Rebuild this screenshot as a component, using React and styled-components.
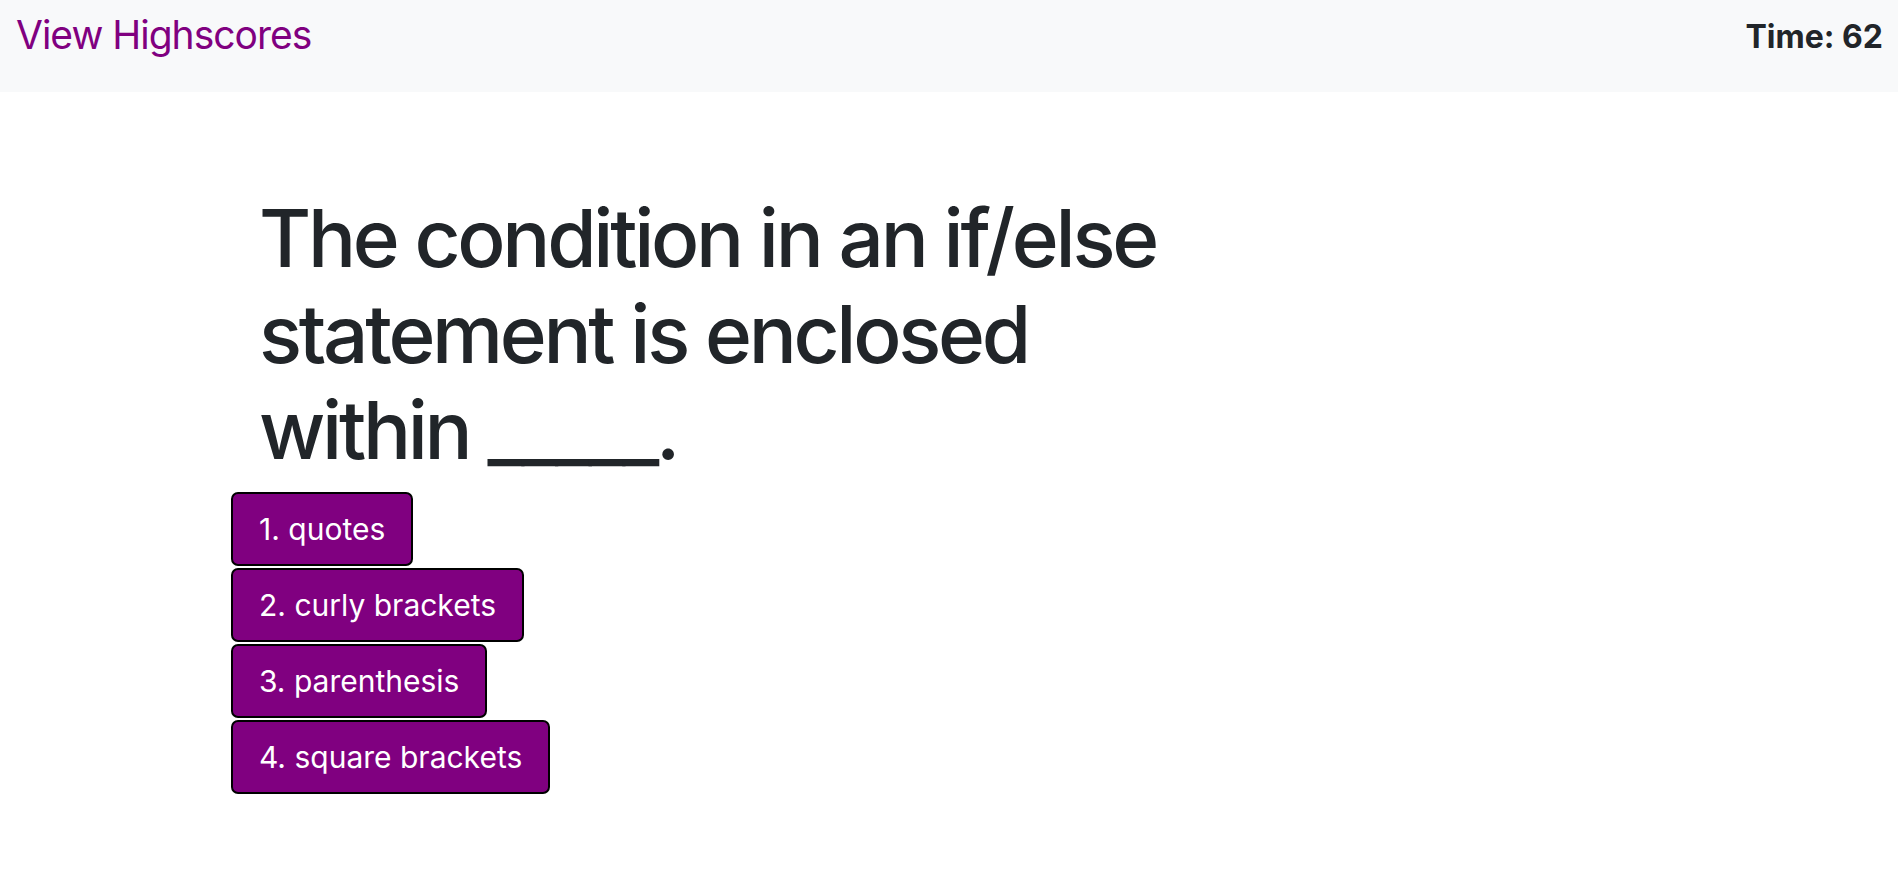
import React from 'react';
import styled, { createGlobalStyle } from 'styled-components';

const GlobalStyle = createGlobalStyle`
  body {
    margin: 0;
    background: #fff;
    font-family: Inter, "Liberation Sans", Arial, sans-serif;
    color: #212529;
  }
`;

const NavBar = styled.nav`
  display: flex;
  align-items: center;
  justify-content: space-between;
  height: 92px;
  padding: 0 15px 0 16px;
  box-sizing: border-box;
  background-color: #f8f9fa;
`;

const HighscoreLink = styled.a`
  color: #800080;
  font-size: 39px;
  letter-spacing: -1px;
  text-decoration: none;
  cursor: pointer;
  margin-top: -23px;
`;

const Timer = styled.span`
  font-size: 32px;
  font-weight: 700;
  margin-top: -20px;
`;

const Main = styled.main`
  padding: 98px 0 0 231px;
`;

const Question = styled.h1`
  max-width: 930px;
  margin: 0 0 14px 28px;
  font-size: 80px;
  font-weight: 500;
  line-height: 96px;
  letter-spacing: -3.3px;
`;

const Choices = styled.div`
  display: flex;
  flex-direction: column;
  align-items: flex-start;
  gap: 2px;
`;

const Choice = styled.button`
  height: 74px;
  padding: 0 26px;
  border: 2px solid #000;
  border-radius: 7px;
  background-color: #800080;
  color: #fff;
  font-family: Inter, "Liberation Sans", Arial, sans-serif;
  font-size: 30px;
  cursor: pointer;
`;

const choices = ['1. quotes', '2. curly brackets', '3. parenthesis', '4. square brackets'];

const App = () => {
  return (
    <>
      <GlobalStyle />
      <NavBar>
        <HighscoreLink>View Highscores</HighscoreLink>
        <Timer>Time: 62</Timer>
      </NavBar>
      <Main>
        <Question>The condition in an if/else statement is enclosed within _____.</Question>
        <Choices>
          {choices.map((c) => (
            <Choice key={c}>{c}</Choice>
          ))}
        </Choices>
      </Main>
    </>
  );
};

export default App;
